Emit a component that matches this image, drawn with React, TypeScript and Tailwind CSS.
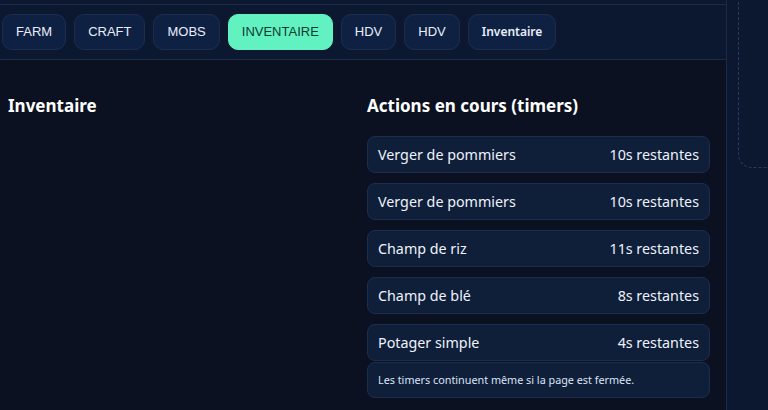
import React from "react";

const tabs = [
  { label: "FARM", active: false },
  { label: "CRAFT", active: false },
  { label: "MOBS", active: false },
  { label: "INVENTAIRE", active: true },
  { label: "HDV", active: false },
  { label: "HDV", active: false },
];

const timers = [
  { name: "Verger de pommiers", left: "10s restantes" },
  { name: "Verger de pommiers", left: "10s restantes" },
  { name: "Champ de riz", left: "11s restantes" },
  { name: "Champ de blé", left: "8s restantes" },
  { name: "Potager simple", left: "4s restantes" },
];

export default function App() {
  return (
    <div
      className="w-[768px] h-[410px] overflow-hidden flex bg-[#0b1120]"
      style={{ fontFamily: '"Noto Sans", "Open Sans", sans-serif' }}
    >
      <div className="w-[727px] shrink-0 flex flex-col border-r border-[#1a2b4a]">
        <div className="h-[4px] bg-[#0c1830]" />
        <div className="h-[56px] bg-[#0c1830] border-y border-[#1b2c4b] flex items-center gap-2 px-[2px]">
          {tabs.map((t, i) => (
            <button
              key={i}
              className={
                t.active
                  ? "h-[36px] px-[13px] rounded-[10px] bg-[#62f2c2] border border-[#62f2c2] text-[13px] text-[#0f3b30]"
                  : "h-[36px] px-[13px] rounded-[10px] bg-[#0f2143] border border-[#1b2e52] text-[13px] text-[#e8eefc]"
              }
              style={{ fontFamily: '"Liberation Sans", Arial, sans-serif' }}
            >
              {t.label}
            </button>
          ))}
          <button className="h-[36px] px-[13px] rounded-[10px] bg-[#0f2143] border border-[#1b2e52] text-[12px] font-semibold text-[#e8eefc]">
            Inventaire
          </button>
        </div>
        <div className="flex-1 grid grid-cols-2 gap-4 pl-2 pr-4 pt-[34px]">
          <div>
            <h2 className="text-[17px] font-bold text-white leading-[24px]">Inventaire</h2>
          </div>
          <div>
            <h2 className="text-[17px] font-bold text-white leading-[24px]">
              Actions en cours (timers)
            </h2>
            <div className="mt-[18px] flex flex-col gap-[10px]">
              {timers.map((t, i) => (
                <div
                  key={i}
                  className="h-[37px] rounded-[8px] bg-[#0f1f3a] border border-[#1b2e4f] flex items-center justify-between pl-[10px] pr-[10px] text-[14.3px] text-[#eef2fb]"
                >
                  <span>{t.name}</span>
                  <span>{t.left}</span>
                </div>
              ))}
            </div>
            <div className="mt-[1px] h-[36px] rounded-[8px] bg-[#0f1f3a] border border-[#1b2e4f] flex items-center px-[10px] text-[10.8px] text-[#dbe4f5]">
              Les timers continuent même si la page est fermée.
            </div>
          </div>
        </div>
      </div>
      <div className="flex-1 bg-[#0c1730] pl-[11px]">
        <div className="h-[184px] -mt-4 border border-dashed border-[#243c60] rounded-bl-[14px] border-r-0 border-t-0" />
      </div>
    </div>
  );
}
